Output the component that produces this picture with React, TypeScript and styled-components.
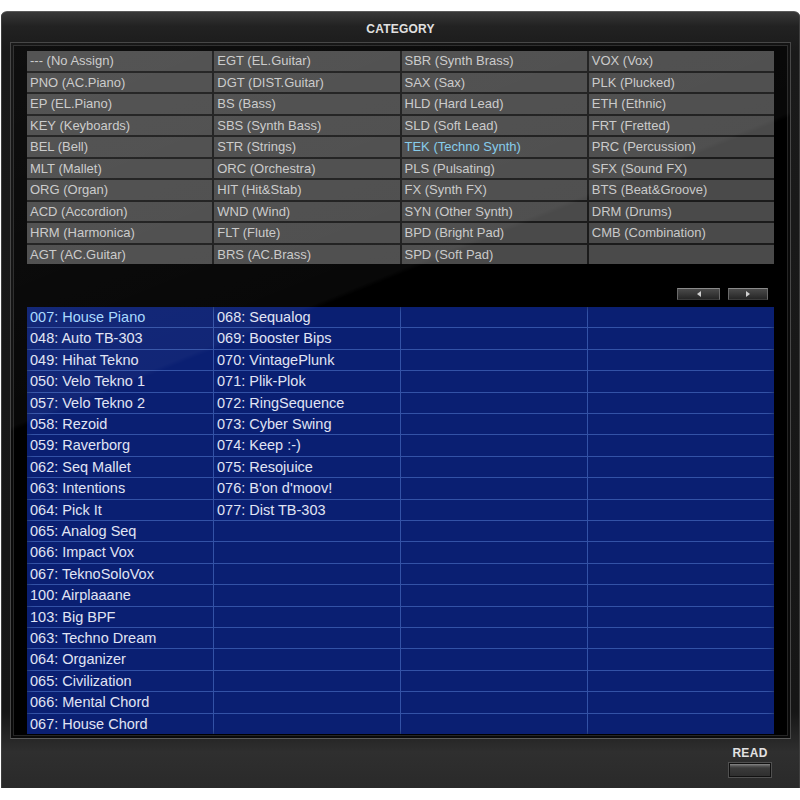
import React from "react";
import styled, { createGlobalStyle } from "styled-components";

const GlobalStyle = createGlobalStyle`
  html, body {
    margin: 0;
    padding: 0;
    background: #ffffff;
  }
  body {
    font-family: "Liberation Sans", Arial, sans-serif;
  }
`;

const Frame = styled.div`
  margin: 11px 0 0 1px;
  width: 799px;
  height: 777px;
  box-sizing: border-box;
  border-radius: 6px 6px 0 0;
  background: linear-gradient(180deg, #383838 0px, #222 14px, #1a1a1a 40px, #161616 700px, #2f2f2f 740px, #282828 788px);
  border-top: 1px solid #5a5a5a;
  box-shadow: inset 1px 0 0 #3e3e3e, inset -1px 0 0 #3e3e3e;
  display: flex;
  flex-direction: column;
  padding: 0 9px 0 9px;
`;

const TitleBar = styled.div`
  height: 30px;
  box-sizing: border-box;
  padding-top: 4px;
  display: flex;
  align-items: center;
  justify-content: center;
  color: #e0e0e0;
  font-weight: bold;
  font-size: 12px;
  letter-spacing: 0.2px;
`;

const Screen = styled.div`
  height: 697px;
  box-sizing: border-box;
  background: #000;
  border: 1px solid #474747;
  border-bottom-color: #5a5a5a;
  box-shadow: inset 0 0 0 2px #0a0a0a, inset 0 0 0 3px #262626;
  padding: 8px 16px 0 16px;
  display: flex;
  flex-direction: column;
  position: relative;
  overflow: hidden;
`;

const Sheen = styled.div`
  position: absolute;
  inset: 0;
  pointer-events: none;
  background: linear-gradient(158deg, rgba(255, 255, 255, 0.06) 0%, rgba(255, 255, 255, 0.03) 38%, rgba(255, 255, 255, 0) 38.5%);
`;

const CategoryGrid = styled.div`
  height: 213px;
  display: grid;
  grid-template-columns: repeat(4, 1fr);
  grid-template-rows: repeat(10, 1fr);
  gap: 2px 2px;
  background: #1b1b1b;
`;

const CategoryCell = styled.div<{ $active?: boolean }>`
  background: #4a4a4a;
  color: ${(p) => (p.$active ? "#82cbea" : "#c9c9c9")};
  font-size: 13px;
  line-height: 19px;
  padding-left: 3px;
  white-space: nowrap;
  overflow: hidden;
`;

const NavRow = styled.div`
  height: 43px;
  display: flex;
  justify-content: flex-end;
  align-items: flex-start;
  gap: 8px;
  padding: 24px 6px 0 0;
  box-sizing: border-box;
`;

const ArrowButton = styled.div<{ $w: number }>`
  width: ${(p) => p.$w}px;
  height: 12px;
  box-sizing: border-box;
  border: 1px solid #6a6a6a;
  border-top-color: #8a8a8a;
  border-bottom-color: #3a3a3a;
  background: linear-gradient(180deg, #4a4a4a, #262626);
  display: flex;
  align-items: center;
  justify-content: center;
`;

const PresetGrid = styled.div`
  height: 427px;
  display: grid;
  grid-template-columns: repeat(4, 1fr);
  grid-template-rows: repeat(20, 1fr);
  gap: 1px;
  background: #3352a6;
  box-shadow: inset 0 0 6px rgba(0, 0, 0, 0.6);
`;

const PresetCell = styled.div<{ $active?: boolean }>`
  background: #0a1f72;
  color: ${(p) => (p.$active ? "#a6d8ff" : "#e0e4f4")};
  font-size: 14.5px;
  line-height: 20px;
  padding-left: 3px;
  white-space: nowrap;
  overflow: hidden;
`;

const Footer = styled.div`
  flex: 1;
  display: flex;
  justify-content: flex-end;
  padding: 7px 20px 0 0;
`;

const ReadGroup = styled.div`
  display: flex;
  flex-direction: column;
  align-items: center;
  gap: 3px;
`;

const ReadLabel = styled.div`
  color: #e2e2e2;
  font-weight: bold;
  font-size: 12px;
  letter-spacing: 0.3px;
`;

const ReadButton = styled.div`
  width: 42px;
  height: 14px;
  box-sizing: border-box;
  border: 1px solid #111;
  background: linear-gradient(180deg, #8a8a8a 0px, #555 2px, #3a3a3a 4px, #2c2c2c 14px);
  box-shadow: 0 0 0 1px #505050;
`;

const categories: string[][] = [
  [
    "--- (No Assign)",
    "PNO (AC.Piano)",
    "EP (EL.Piano)",
    "KEY (Keyboards)",
    "BEL (Bell)",
    "MLT (Mallet)",
    "ORG (Organ)",
    "ACD (Accordion)",
    "HRM (Harmonica)",
    "AGT (AC.Guitar)",
  ],
  [
    "EGT (EL.Guitar)",
    "DGT (DIST.Guitar)",
    "BS (Bass)",
    "SBS (Synth Bass)",
    "STR (Strings)",
    "ORC (Orchestra)",
    "HIT (Hit&Stab)",
    "WND (Wind)",
    "FLT (Flute)",
    "BRS (AC.Brass)",
  ],
  [
    "SBR (Synth Brass)",
    "SAX (Sax)",
    "HLD (Hard Lead)",
    "SLD (Soft Lead)",
    "TEK (Techno Synth)",
    "PLS (Pulsating)",
    "FX (Synth FX)",
    "SYN (Other Synth)",
    "BPD (Bright Pad)",
    "SPD (Soft Pad)",
  ],
  [
    "VOX (Vox)",
    "PLK (Plucked)",
    "ETH (Ethnic)",
    "FRT (Fretted)",
    "PRC (Percussion)",
    "SFX (Sound FX)",
    "BTS (Beat&Groove)",
    "DRM (Drums)",
    "CMB (Combination)",
    "",
  ],
];

const presets: string[][] = [
  [
    "007: House Piano",
    "048: Auto TB-303",
    "049: Hihat Tekno",
    "050: Velo Tekno 1",
    "057: Velo Tekno 2",
    "058: Rezoid",
    "059: Raverborg",
    "062: Seq Mallet",
    "063: Intentions",
    "064: Pick It",
    "065: Analog Seq",
    "066: Impact Vox",
    "067: TeknoSoloVox",
    "100: Airplaaane",
    "103: Big BPF",
    "063: Techno Dream",
    "064: Organizer",
    "065: Civilization",
    "066: Mental Chord",
    "067: House Chord",
  ],
  [
    "068: Sequalog",
    "069: Booster Bips",
    "070: VintagePlunk",
    "071: Plik-Plok",
    "072: RingSequence",
    "073: Cyber Swing",
    "074: Keep :-)",
    "075: Resojuice",
    "076: B'on d'moov!",
    "077: Dist TB-303",
  ],
  [],
  [],
];

const Triangle = ({ dir }: { dir: "left" | "right" }) => (
  <svg width="4" height="6" viewBox="0 0 4 6">
    <path d={dir === "left" ? "M4 0 L0 3 L4 6 Z" : "M0 0 L4 3 L0 6 Z"} fill="#cfcfcf" />
  </svg>
);

export default function App() {
  const catRows = Array.from({ length: 10 }, (_, r) => r);
  const presetRows = Array.from({ length: 20 }, (_, r) => r);
  return (
    <>
      <GlobalStyle />
      <Frame>
        <TitleBar>CATEGORY</TitleBar>
        <Screen>
          <CategoryGrid>
            {catRows.map((r) =>
              categories.map((col, c) => (
                <CategoryCell key={`${r}-${c}`} $active={col[r] === "TEK (Techno Synth)"}>
                  {col[r]}
                </CategoryCell>
              ))
            )}
          </CategoryGrid>
          <NavRow>
            <ArrowButton $w={43}>
              <Triangle dir="left" />
            </ArrowButton>
            <ArrowButton $w={40}>
              <Triangle dir="right" />
            </ArrowButton>
          </NavRow>
          <PresetGrid>
            {presetRows.map((r) =>
              presets.map((col, c) => (
                <PresetCell key={`${r}-${c}`} $active={r === 0 && c === 0}>
                  {col[r] ?? ""}
                </PresetCell>
              ))
            )}
          </PresetGrid>
          <Sheen />
        </Screen>
        <Footer>
          <ReadGroup>
            <ReadLabel>READ</ReadLabel>
            <ReadButton />
          </ReadGroup>
        </Footer>
      </Frame>
    </>
  );
}
